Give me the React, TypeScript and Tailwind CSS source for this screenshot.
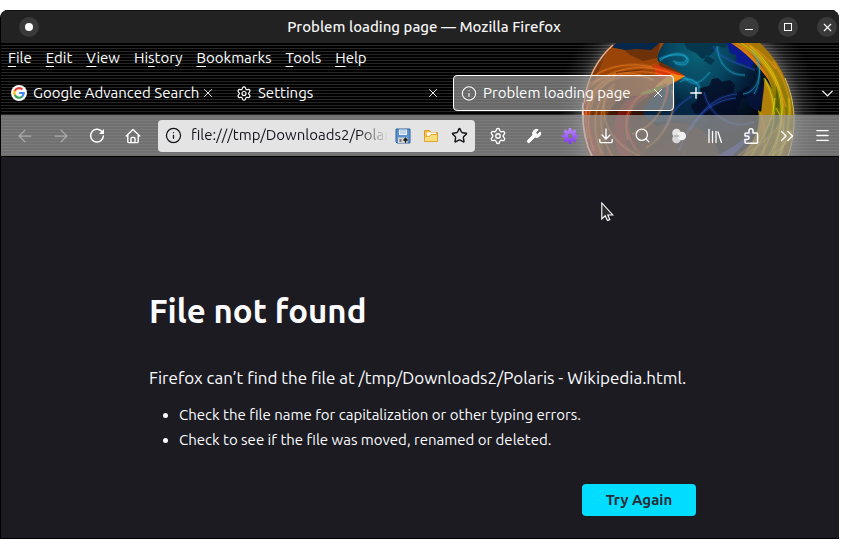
import React, { useState } from 'react';
import {
  ArrowLeft,
  ArrowRight,
  ChevronDown,
  ChevronsRight,
  Info,
  Menu,
  Plus,
  Search,
  Settings,
  Star,
  Wrench,
  X,
} from 'lucide-react';

type TabItem = {
  id: number;
  title: string;
  icon: React.ReactNode;
};

const GoogleIcon = () => (
  <svg width="16" height="16" viewBox="0 0 16 16">
    <circle cx="8" cy="8" r="8" fill="#fff" />
    <g fill="none" strokeWidth="2.2">
      <path d="M11.4 4.6A4.7 4.7 0 0 0 3.8 5.9" stroke="#ea4335" />
      <path d="M3.8 5.8a4.8 4.8 0 0 0 0 4.4" stroke="#fbbc05" />
      <path d="M3.8 10.1a4.7 4.7 0 0 0 7.3 1.5" stroke="#34a853" />
      <path d="M8.2 8h4.5a4.7 4.7 0 0 1-1.6 3.6" stroke="#4285f4" />
    </g>
  </svg>
);

const ReloadIcon = () => (
  <svg width="16" height="16" viewBox="0 0 16 16" fill="none" stroke="currentColor" strokeWidth="1.5" strokeLinecap="round">
    <path d="M12.6 3.2A6.4 6.4 0 1 0 14.4 8" />
    <path d="M15 1v5h-5z" fill="currentColor" stroke="none" />
  </svg>
);

const HomeIcon = () => (
  <svg width="16" height="16" viewBox="0 0 16 16" fill="none" stroke="currentColor" strokeWidth="1.4" strokeLinecap="round" strokeLinejoin="round">
    <path d="M1.2 8 8 1.6 14.8 8M2.8 7v6.4a1.2 1.2 0 0 0 1.2 1.2h8a1.2 1.2 0 0 0 1.2-1.2V7" />
    <path d="M6 14.4v-4a1 1 0 0 1 1-1h2a1 1 0 0 1 1 1v4" />
  </svg>
);

const SaveIcon = () => (
  <svg width="16" height="16" viewBox="0 0 16 16">
    <path d="M1 1h14v14H2l-1-1z" fill="#5b92cf" stroke="#33639c" />
    <path d="M4 1.5h8v5.5H4z" fill="#e9f0f8" />
    <path d="M5 3h6M5 5h6" stroke="#9fb9d6" />
    <path d="M3 9.5h9.5V15H3z" fill="#d4d4d4" />
    <path d="M4.5 11h2v3h-2z" fill="#777" />
    <path d="M10.5 15v-4M8.5 12.5l2-2.2 2 2.2" stroke="#222" strokeWidth="1.3" fill="none" />
  </svg>
);

const FolderIcon = () => (
  <svg width="16" height="16" viewBox="0 0 16 16">
    <path d="M1.5 13.5v-11h5l1.5 2h6.5v9z" fill="#f5c34a" stroke="#d89a2c" />
    <path d="M4 4.5h9v4H4z" fill="#fff" />
    <path d="M1.5 13.5V8.3h5L8 6.5h6.5v7z" fill="#fbdd7c" stroke="#dfa534" />
  </svg>
);

const PurpleGearIcon = () => (
  <svg width="16" height="16" viewBox="0 0 16 16">
    <defs>
      <linearGradient id="gear" x1="0" y1="0" x2="0" y2="1">
        <stop offset="0" stopColor="#b98aff" />
        <stop offset="1" stopColor="#8138ee" />
      </linearGradient>
    </defs>
    <path
      fill="url(#gear)"
      fillRule="evenodd"
      d="M6.8 0h2.4l.4 2.4 1.2.5 2-1.4 1.7 1.7-1.4 2 .5 1.2 2.4.4v2.4l-2.4.4-.5 1.2 1.4 2-1.7 1.7-2-1.4-1.2.5L9.2 16H6.8l-.4-2.4-1.2-.5-2 1.4-1.7-1.7 1.4-2-.5-1.2L0 9.2V6.8l2.4-.4.5-1.2-1.4-2 1.7-1.7 2 1.4 1.2-.5zM8 5.7a2.3 2.3 0 1 0 0 4.6 2.3 2.3 0 0 0 0-4.6z"
    />
  </svg>
);

const DownloadIcon = () => (
  <svg width="16" height="16" viewBox="0 0 16 16" fill="none" stroke="currentColor" strokeWidth="1.4" strokeLinecap="round" strokeLinejoin="round">
    <path d="M8 1v9.5M4 7l4 4 4-4M1.8 11.5v1.8a1.3 1.3 0 0 0 1.3 1.3h9.8a1.3 1.3 0 0 0 1.3-1.3v-1.8" />
  </svg>
);

const CirclesIcon = () => (
  <svg width="16" height="16" viewBox="0 0 16 16">
    <circle cx="5.5" cy="5" r="4.3" fill="#e6e6e6" />
    <circle cx="5.5" cy="11" r="4.3" fill="#d9d9d9" />
    <circle cx="10.8" cy="8" r="4.3" fill="#f2f2f2" />
    <path d="M2.5 8a4.3 4.3 0 0 1 6.3 0 4.3 4.3 0 0 1-6.3 0z" fill="#b9b9b9" />
  </svg>
);

const LibraryIcon = () => (
  <svg width="16" height="16" viewBox="0 0 16 16" fill="none" stroke="currentColor" strokeWidth="1.3" strokeLinecap="round">
    <path d="M2 1.5v13M5.5 3.5v11M9 3.5v11M11 4l3.5 10.5" />
  </svg>
);

const ExtensionIcon = () => (
  <svg width="18" height="18" viewBox="0 0 18 18" fill="none" stroke="currentColor" strokeWidth="1.5" strokeLinejoin="round">
    <path d="M7 6V3.8a2 2 0 0 1 4 0V6h3.6a1 1 0 0 1 1 1v8.2a1 1 0 0 1-1 1H4a1 1 0 0 1-1-1v-2.6h2.2a1.8 1.8 0 0 0 0-3.600H3V7a1 1 0 0 1 1-1z" />
  </svg>
);

const Cursor = () => (
  <svg className="absolute top-[45px] left-[600px]" width="13" height="20" viewBox="0 0 13 20">
    <path d="M.8 1v16l3.4-3.2 2.2 4.8 2.4-1-2-4.6h5z" fill="#2d2d2d" stroke="#fff" strokeWidth="1.1" />
  </svg>
);

// Curved light trails, drawn twice: wide and faint, then thin and bright
const Trails = ({ color, paths }: { color: string; paths: string[] }) => (
  <g fill="none" stroke={color}>
    {paths.map((d) => (
      <React.Fragment key={d}>
        <path d={d} strokeWidth="3.5" opacity="0.16" />
        <path d={d} strokeWidth="0.8" opacity="0.65" />
      </React.Fragment>
    ))}
  </g>
);

// Theme artwork behind the menu, tabs and toolbar
const GlobeArt = () => (
  <svg className="absolute top-0 right-0" width="279" height="113" viewBox="560 43 279 113">
    <defs>
      <radialGradient id="halo" gradientUnits="userSpaceOnUse" cx="688" cy="121" r="134">
        <stop offset="0.79" stopColor="#ddd" stopOpacity="0.32" />
        <stop offset="0.87" stopColor="#bbb" stopOpacity="0.14" />
        <stop offset="1" stopColor="#888" stopOpacity="0" />
      </radialGradient>
      <radialGradient id="fur" gradientUnits="userSpaceOnUse" cx="640" cy="120" r="80">
        <stop offset="0" stopColor="#2a1006" />
        <stop offset="0.55" stopColor="#4c2007" />
        <stop offset="1" stopColor="#9a450a" />
      </radialGradient>
      <linearGradient id="snout" gradientUnits="userSpaceOnUse" x1="600" y1="80" x2="686" y2="76">
        <stop offset="0" stopColor="#7c3a09" />
        <stop offset="0.6" stopColor="#b04a08" />
        <stop offset="0.85" stopColor="#e4420a" />
        <stop offset="1" stopColor="#f59a16" />
      </linearGradient>
      <radialGradient id="ocean" gradientUnits="userSpaceOnUse" cx="698" cy="55" r="86">
        <stop offset="0" stopColor="#0a6276" />
        <stop offset="0.35" stopColor="#074660" />
        <stop offset="0.65" stopColor="#041d38" />
        <stop offset="1" stopColor="#02050c" />
      </radialGradient>
      <linearGradient id="tail" gradientUnits="userSpaceOnUse" x1="745" y1="43" x2="790" y2="156">
        <stop offset="0" stopColor="#a87405" />
        <stop offset="0.35" stopColor="#a07d08" />
        <stop offset="0.6" stopColor="#7f7a04" />
        <stop offset="1" stopColor="#7e4f06" />
      </linearGradient>
      <clipPath id="disc">
        <circle cx="688" cy="121" r="106" />
      </clipPath>
    </defs>
    <rect x="560" y="43" width="279" height="113" fill="url(#halo)" />
    <g clipPath="url(#disc)">
      <rect x="560" y="10" width="260" height="220" fill="url(#fur)" />
      <path d="M611 43h56l-9 15 2 10-24 2-22 2-24 18z" fill="#9a4408" />
      <path d="M622 48l10-1 14 2 14-5-3 14-14 3-13-6z" fill="#6e3208" />
      <path d="M611 43h49l-9 7-14-1-12 1-15-3z" fill="#06264c" />

      {/* ocean */}
      <path d="M664 43c-5 8-8 13-6 18 8 4 20 9 27 15-9 7-19 9-25 15-7 7-17 14-16 22 2 9 14 13 24 20 9 6 17 12 20 24h60l34-60-28-60z" fill="url(#ocean)" />
      <path d="M662 92c-10 6-19 13-18 22 3 9 14 9 22 7 10-3 30 2 36-13z" fill="#052744" />
      <path d="M654 128c18-10 46-4 56 10 6 7 9 13 10 18h-75z" fill="#2c1a0e" opacity="0.9" />

      {/* continents */}
      <path d="M684 43l3 6 9 4 6 6 10-5 5-8 8 2 4-5zM706 55l9 5-4 5-7-4z" fill="#04364e" />
      <path d="M727 43l3 10 6 2 1 8 8 1 5 5 5-8-4-9-9-9z" fill="#0c1a8e" />
      <path d="M700 88l9-2 3-7 6-1 4 4 8-2 5 5-2 9 9-3 6-5 4 6-2 5-8 2-5 11 4 8-15 11-14-4-6-9-12-3-3-8 6-4z" fill="#050b24" opacity="0.8" />
      <path d="M746 96l3-8 7 1 3-5 6 5-1 14-7 8-8-6z" fill="#06143c" opacity="0.8" />

      {/* snout */}
      <path d="M585 96c10-17 25-24 43-24 12 0 20-4 26-9 8 5 22 8 31 13-7 6-14 8-20 11-9 4-13 7-20 8-14 2-25 0-33 12-8 10-12 28-7 49h-20z" fill="url(#snout)" opacity="0.75" />
      <path d="M655 64c9 5 21 8 30 12-5 3-10 2-14 5-5-1-14-4-16-8z" fill="#d8330c" />
      <path d="M671 74l14 2-17 9c-5 2-9 1-13 3 4-7 10-9 16-14z" fill="#f08a14" />
      <path d="M668 83l-14 5c-7 3-11 2-14 6 13 1 22-4 28-11z" fill="#6d7a10" />
      <path d="M649 95c-12 2-21 10-24 20-3 12 0 27 7 41h-12c-9-20-7-40 4-53 7-6 16-9 25-8z" fill="#8e1711" opacity="0.7" />
      <path d="M584 100c-2 20 1 39 9 56h8c-9-18-12-37-12-56z" fill="#a81f14" opacity="0.7" />

      {/* tail */}
      <path d="M731 43c13 6 23 12 30 22 4 6 7 14 11 24l-7-11c-3 12 1 23-2 35l-5-3c3 17-3 30-16 46h58V95l-24-52z" fill="url(#tail)" />
      <path d="M766 80c2 9 8 13 7 24-2 14-7 25-17 37 6-20 5-43 10-61z" fill="#b0800a" />
      <path d="M776 84c7 11 8 25 3 38-4 11-10 19-17 26 5-20 15-38 14-64z" fill="#4c5404" opacity="0.8" />
      <path d="M731 43c16 5 32 20 39 39-10-14-22-28-39-39z" fill="#e07d0a" />
      <path d="M754 128c-3 9-11 18-22 28h-15c13-7 27-15 37-28z" fill="#2b35a8" opacity="0.8" />

      <Trails
        color="#22b6de"
        paths={[
          'M660 61c9-9 24-9 27-3 0 6-8 6-14 3',
          'M659 59c14-6 26-5 29 0 1 7-8 7-13 4',
          'M680 82c6-5 18-2 20 6M682 79c10-2 18 4 17 14',
          'M717 46c1 17 12 30 28 29',
          'M752 50c10 15 9 32 2 44M757 56c6 18 1 36-14 38',
          'M684 76c8 12 16 8 26-4',
        ]}
      />
      <Trails
        color="#2a58d0"
        paths={[
          'M679 151c10-29 30-51 57-53',
          'M690 130c14-24 28-34 47-36',
          'M704 92c6 26 30 38 50 30',
          'M713 46c8 14 24 17 42 24',
          'M664 130c8-18 12-24 28-34',
        ]}
      />
      <Trails
        color="#ff8a26"
        paths={[
          'M586 90c24-22 56-30 92-14',
          'M589 84c26-14 62-16 80-6',
          'M594 76c14-10 38-14 58-9',
          'M585 104c12-28 46-38 68-24',
          'M584 118c8-36 38-50 70-38',
          'M588 139c-7-31 4-55 28-66',
          'M594 151c-13-36-1-62 22-75',
          'M602 154c-13-30-7-55 13-70',
          'M612 156c-16-28-14-52 2-68',
          'M640 156c-28-12-42-36-34-62',
          'M628 140c-6-22 2-40 22-50',
          'M672 90c6 20-6 46-26 58',
          'M668 84c-2 26-16 44-36 50',
        ]}
      />
      <Trails color="#e8281c" paths={['M640 154c-16-18-20-44 8-59', 'M636 150c-14-20-14-40 2-53', 'M663 83c5 4 6 12 1 19']} />
      <Trails
        color="#f2ec14"
        paths={[
          'M741 43c24 14 38 38 40 62s-5 38-12 51',
          'M750 46c22 18 34 42 32 68-1 13-4 27-10 42',
          'M775 98c-2 23-11 39-24 58',
          'M764 78c14 24 14 50-4 78',
          'M789 98c1 22-1 38-9 58',
          'M776 108c10 16 10 32 2 48',
          'M772 156c10-8 17-16 20-26',
        ]}
      />
      <Trails
        color="#ff9a20"
        paths={[
          'M736 43c26 14 42 34 50 64',
          'M773 61c12 18 18 37 18 57',
          'M746 43c12 7 22 15 30 26',
          'M760 112c5 13 6 28 3 44',
          'M782 98c5 19 2 38-8 57',
          'M738 156c16-12 30-24 36-44',
          'M744 156c14-10 26-18 38-34',
        ]}
      />
    </g>
    <path d="M613 45c-17 15-26 34-29 58" fill="none" stroke="#ffab78" strokeWidth="1.5" />
    <path d="M583 103c-1 19 1 38 9 53" fill="none" stroke="#ffd9d2" strokeWidth="1.8" />
    <path d="M785 78c11 25 12 52 3 78" fill="none" stroke="#dfc872" strokeWidth="0.9" />
  </svg>
);

const menus = [
  { before: '', key: 'F', after: 'ile' },
  { before: '', key: 'E', after: 'dit' },
  { before: '', key: 'V', after: 'iew' },
  { before: 'Hi', key: 's', after: 'tory' },
  { before: '', key: 'B', after: 'ookmarks' },
  { before: '', key: 'T', after: 'ools' },
  { before: '', key: 'H', after: 'elp' },
];

const tabs: TabItem[] = [
  { id: 1, title: 'Google Advanced Search', icon: <GoogleIcon /> },
  { id: 2, title: 'Settings', icon: <Settings size={17} strokeWidth={1.8} /> },
  { id: 3, title: 'Problem loading page', icon: <Info size={17} strokeWidth={1.6} /> },
];

const navButtons = [
  { label: 'Back', icon: <ArrowLeft size={20} strokeWidth={1.5} />, disabled: true },
  { label: 'Forward', icon: <ArrowRight size={20} strokeWidth={1.5} />, disabled: true },
  { label: 'Reload', icon: <ReloadIcon />, disabled: false },
  { label: 'Home', icon: <HomeIcon />, disabled: false },
];

const toolButtons = [
  { label: 'Settings', icon: <Settings size={18} strokeWidth={1.8} /> },
  { label: 'Developer tools', icon: <Wrench size={16} fill="currentColor" strokeWidth={1.5} /> },
  { label: 'Preferences', icon: <PurpleGearIcon /> },
  { label: 'Downloads', icon: <DownloadIcon /> },
  { label: 'Search', icon: <Search size={17} strokeWidth={1.8} /> },
  { label: 'Containers', icon: <CirclesIcon /> },
  { label: 'Library', icon: <LibraryIcon /> },
  { label: 'Extensions', icon: <ExtensionIcon /> },
  { label: 'More tools', icon: <ChevronsRight size={22} strokeWidth={1.5} /> },
  { label: 'Open menu', icon: <Menu size={17} strokeWidth={1.8} /> },
];

const windowButton = 'flex size-5 items-center justify-center rounded-full bg-[#3a3a3a]';

const App: React.FC = () => {
  const [activeTab, setActiveTab] = useState(3);
  const [url, setUrl] = useState('file:///tmp/Downloads2/Polaris - Wikipedia.html');

  return (
    <div className="bg-white py-[10px] pr-5 font-['Ubuntu','Noto_Sans',sans-serif] text-[15px] text-white">
      <div className="overflow-hidden rounded-t-lg border-b border-l border-black bg-[#1c1b22]">
        {/* Title bar */}
        <div className="grid h-[33px] grid-cols-[1fr_auto_1fr] items-center border-t border-[#111] bg-[#222] pr-[2px] pl-[10px]">
          <button aria-label="Window menu" className={`ml-2 ${windowButton}`}>
            <span className="size-2 rounded-full bg-white" />
          </button>
          <div className="font-medium whitespace-nowrap text-[#f4f4f4]">Problem loading page — Mozilla Firefox</div>
          <div className="flex justify-end gap-[19px]">
            <button aria-label="Minimize" className={windowButton}>
              <span className="mt-[5px] h-px w-2 bg-white" />
            </button>
            <button aria-label="Maximize" className={windowButton}>
              <span className="size-2 border border-white" />
            </button>
            <button aria-label="Close" className={windowButton}>
              <X size={13} strokeWidth={2} />
            </button>
          </div>
        </div>

        {/* Menu, tabs and toolbar share the theme background */}
        <header className="relative bg-[repeating-linear-gradient(#000_0_2px,#262626_2px_3px)]">
          <GlobeArt />
          <nav className="relative flex h-[30px] items-center gap-[14px] pl-[7px]">
            {menus.map((menu) => (
              <button key={menu.key + menu.after}>
                {menu.before}
                <span className="underline underline-offset-3">{menu.key}</span>
                {menu.after}
              </button>
            ))}
          </nav>

          <div className="relative flex h-[42px] items-start gap-1 pt-[2px] pl-[2px]">
            {tabs.map((tab) => (
              <div
                key={tab.id}
                className={`flex h-9 w-[221px] items-center rounded border px-[7px] ${
                  activeTab === tab.id ? 'border-white bg-[#a0a0a0]/65 [text-shadow:1px_1px_1px_#000]' : 'border-transparent'
                }`}
              >
                <button className="flex min-w-0 flex-1 items-center gap-[6px]" onClick={() => setActiveTab(tab.id)}>
                  <span className="flex w-4 shrink-0 justify-center">{tab.icon}</span>
                  <span className="overflow-hidden whitespace-nowrap">{tab.title}</span>
                </button>
                <button aria-label={`Close ${tab.title}`} className="flex w-4 shrink-0 justify-center">
                  <X size={14} strokeWidth={1.6} />
                </button>
              </div>
            ))}
            <button aria-label="New tab" className="flex h-9 w-9 items-center justify-center">
              <Plus size={18} strokeWidth={1.8} />
            </button>
            <button aria-label="List all tabs" className="mr-[2px] ml-auto flex h-9 items-center">
              <ChevronDown size={19} strokeWidth={1.6} />
            </button>
          </div>

          <div className="relative flex h-[41px] items-center bg-[#a0a0a0]/70 pl-[6px]">
            {navButtons.map((button) => (
              <button
                key={button.label}
                aria-label={button.label}
                disabled={button.disabled}
                className="flex size-9 items-center justify-center disabled:opacity-40"
              >
                {button.icon}
              </button>
            ))}
            <div className="ml-[7px] flex h-8 min-w-0 flex-1 items-center rounded bg-[#e4e4e4] pr-[7px] pl-[7px] text-[#15141a]">
              <Info size={17} strokeWidth={1.8} className="shrink-0" />
              <input
                aria-label="Address"
                className="ml-[9px] w-0 min-w-0 flex-1 bg-transparent mask-r-from-85% outline-none"
                value={url}
                onChange={(e) => setUrl(e.target.value)}
              />
              <div className="ml-[7px] flex shrink-0 gap-3">
                <button aria-label="Save page">
                  <SaveIcon />
                </button>
                <button aria-label="Open folder">
                  <FolderIcon />
                </button>
                <button aria-label="Bookmark this page">
                  <Star size={17} strokeWidth={2} />
                </button>
              </div>
            </div>
            <div className="ml-[7px] flex w-[357px] shrink-0 justify-between">
              {toolButtons.map((button) => (
                <button key={button.label} aria-label={button.label} className="flex size-8 items-center justify-center">
                  {button.icon}
                </button>
              ))}
            </div>
          </div>
        </header>

        {/* Error page */}
        <main className="relative border-t border-black pt-[132px] pr-[143px] pb-[22px] pl-[148px] text-[#fbfbfe]">
          <Cursor />
          <h1 className="text-[33px] leading-[44px] font-bold">File not found</h1>
          <p className="mt-[31px] text-[17px] leading-7 whitespace-nowrap">
            Firefox can’t find the file at /tmp/Downloads2/Polaris - Wikipedia.html.
          </p>
          <ul className="mt-[10px] list-disc pl-[30px] leading-[25px]">
            <li>Check the file name for capitalization or other typing errors.</li>
            <li>Check to see if the file was moved, renamed or deleted.</li>
          </ul>
          <div className="mt-8 flex justify-end">
            <button className="h-8 w-[114px] rounded bg-[#00ddff] font-bold text-[#2b2a33]">Try Again</button>
          </div>
        </main>
      </div>
    </div>
  );
};

export default App;
